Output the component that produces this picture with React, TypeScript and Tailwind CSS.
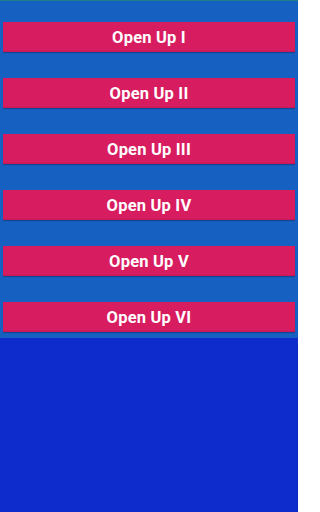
import React from "react";

const labels = ["Open Up I", "Open Up II", "Open Up III", "Open Up IV", "Open Up V", "Open Up VI"];

export default function App() {
  return (
    <div className="w-[298px] h-[512px] flex flex-col bg-[#0e2bcc]" style={{ fontFamily: "Roboto, 'Noto Sans', sans-serif" }}>
      <div className="h-px bg-[#1f7f86]" />
      <div className="flex flex-col gap-[26px] bg-[#1660c2] pt-[21px] pb-[6px] px-[3px]">
        {labels.map((l) => (
          <div
            key={l}
            className="h-[30px] flex items-center justify-center pt-[3px] bg-[#d81c60] border-b border-[#c4185a] shadow-[0_1px_1px_rgba(0,0,0,0.25)] text-white font-bold text-[16.5px] tracking-[0.2px]"
          >
            {l}
          </div>
        ))}
      </div>
    </div>
  );
}
